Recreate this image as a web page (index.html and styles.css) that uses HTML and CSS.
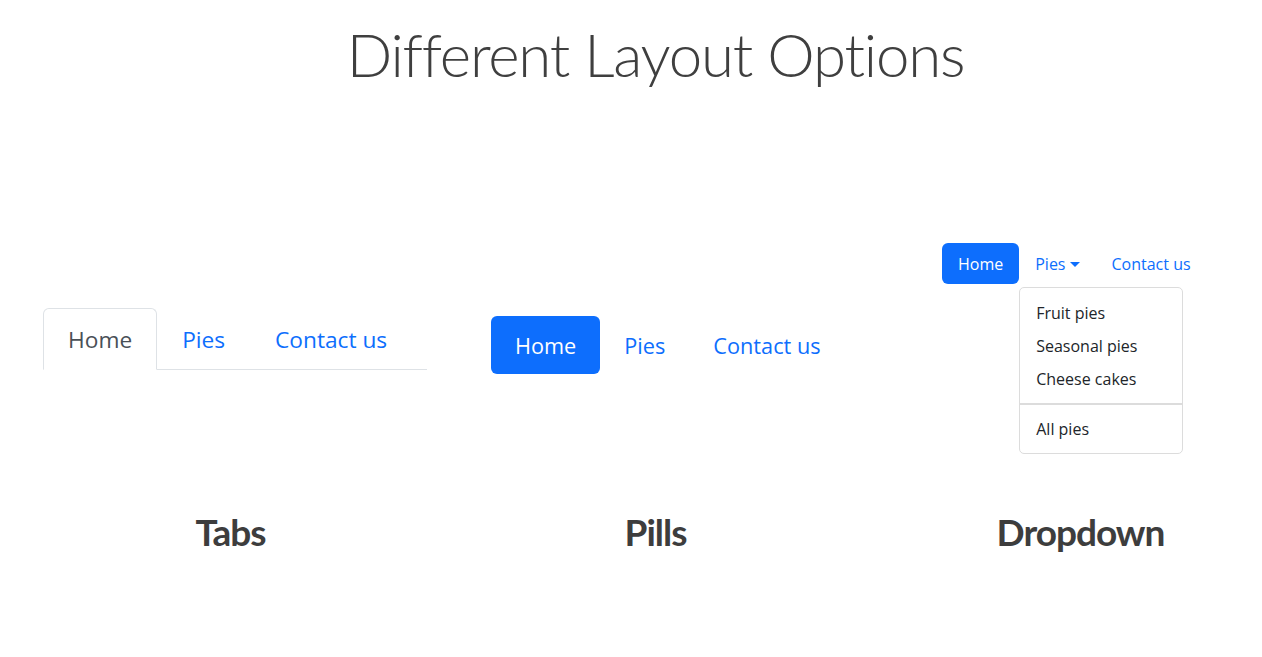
FILE: index.html
```html
<!DOCTYPE html>
<html lang="en">
<head>
<meta charset="utf-8">
<title>Different Layout Options</title>
<link rel="stylesheet" href="styles.css">
</head>
<body>
<div class="page">
  <h1 class="title">Different Layout Options</h1>

  <div class="examples">
    <div class="col col-tabs">
      <nav class="tabs">
        <a class="tab active" href="#">Home</a>
        <a class="tab" href="#">Pies</a>
        <a class="tab" href="#">Contact us</a>
      </nav>
    </div>
    <div class="col col-pills">
      <nav class="pills">
        <a class="pill active" href="#">Home</a>
        <a class="pill" href="#">Pies</a>
        <a class="pill" href="#">Contact us</a>
      </nav>
    </div>
    <div class="col col-dropdown">
      <nav class="dnav">
        <a class="ditem active" href="#">Home</a>
        <div class="dwrap">
          <a class="ditem toggle" href="#">Pies<span class="caret"></span></a>
          <div class="menu">
            <a class="menu-item" href="#">Fruit pies</a>
            <a class="menu-item" href="#">Seasonal pies</a>
            <a class="menu-item" href="#">Cheese cakes</a>
            <div class="divider"></div>
            <a class="menu-item" href="#">All pies</a>
          </div>
        </div>
        <a class="ditem" href="#">Contact us</a>
      </nav>
    </div>
  </div>

  <div class="labels">
    <h2 class="label">Tabs</h2>
    <h2 class="label">Pills</h2>
    <h2 class="label">Dropdown</h2>
  </div>
</div>
</body>
</html>
```

FILE: styles.css
```css
html, body {
  margin: 0;
  padding: 0;
  background: #fff;
  overflow: hidden;
}

body {
  font-family: "Open Sans", Lato, sans-serif;
  color: #212529;
}

a {
  text-decoration: none;
}

.page {
  width: 1275px;
  margin-left: 18px;
  padding-top: 17px;
}

.title {
  margin: 0;
  font-family: Lato, sans-serif;
  font-weight: 300;
  font-size: 60px;
  line-height: 74px;
  letter-spacing: -1.2px;
  color: #3f3f3f;
  text-align: center;
}

.examples {
  margin-top: 152px;
  display: grid;
  grid-template-columns: 425px 425px 425px;
  align-items: start;
}

.col-tabs {
  padding-left: 25px;
  padding-top: 65px;
}

.col-pills {
  padding-left: 48px;
  padding-top: 73px;
}

.col-dropdown {
  padding-left: 74px;
}

/* Tabs */
.tabs {
  display: flex;
  width: 384px;
  border-bottom: 1px solid #dee2e6;
  font-size: 22.7px;
}

.tab {
  padding: 14px 24px 12px;
  line-height: 34px;
  border: 1px solid transparent;
  border-radius: 6px 6px 0 0;
  margin-bottom: -1px;
  color: #0d6efd;
}

.tab.active {
  color: #495057;
  border-color: #dee2e6 #dee2e6 #fff;
  background: #fff;
}

/* Pills */
.pills {
  display: flex;
  font-size: 21.7px;
}

.pill {
  padding: 13px 24px 11px;
  line-height: 34px;
  border-radius: 6px;
  color: #0d6efd;
}

.pill.active {
  background: #0d6efd;
  color: #fff;
}

/* Dropdown nav */
.dnav {
  display: flex;
  font-size: 16px;
}

.ditem {
  display: block;
  padding: 9px 16px 7px;
  line-height: 25px;
  color: #0d6efd;
  border-radius: 6px;
}

.ditem.active {
  background: #0d6efd;
  color: #fff;
}

.dwrap {
  position: relative;
}

.caret {
  display: inline-block;
  margin-left: 4px;
  vertical-align: 3px;
  border-top: 5px solid #0d6efd;
  border-left: 5px solid transparent;
  border-right: 5px solid transparent;
}

.menu {
  position: absolute;
  top: calc(100% + 3px);
  left: 0;
  width: 162px;
  padding: 8px 0;
  border: 1px solid #dcdcdc;
  border-radius: 5px;
  background: #fff;
}

.menu-item {
  display: block;
  padding: 5px 16px 3px;
  line-height: 25px;
  color: #212529;
  white-space: nowrap;
}

.divider {
  margin: 8px 0 7px;
  border-top: 2px solid #dcdcdc;
}

/* Labels */
.labels {
  margin-top: 135px;
  display: grid;
  grid-template-columns: 425px 425px 425px;
}

.label {
  margin: 0;
  text-align: center;
  font-family: Lato, sans-serif;
  font-weight: 700;
  font-size: 37px;
  line-height: 46px;
  letter-spacing: -1px;
  color: #3d3d3d;
}
```
